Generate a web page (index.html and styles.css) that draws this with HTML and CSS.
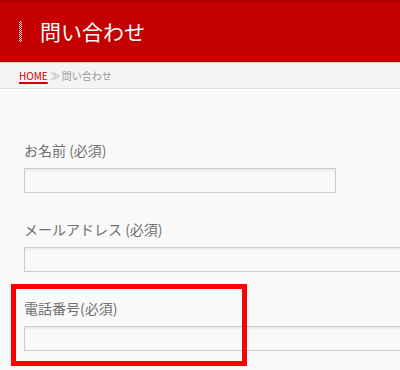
FILE: index.html
```html
<!DOCTYPE html>
<html lang="ja">
<head>
  <meta charset="UTF-8">
  <meta name="viewport" content="width=device-width, initial-scale=1.0">
  <title>問い合わせ</title>
  <link rel="stylesheet" href="styles.css">
</head>
<body>
  <header class="page-head">
    <span class="head-bar"></span>
    <h1>問い合わせ</h1>
  </header>

  <nav class="crumbs">
    <a href="#">HOME</a>
    <span class="sep">≫</span>
    <span class="here">問い合わせ</span>
  </nav>

  <main class="content">
    <form class="contact">
      <div class="field">
        <label for="name">お名前 (必須)</label>
        <input type="text" id="name" class="short">
      </div>
      <div class="field">
        <label for="mail">メールアドレス (必須)</label>
        <input type="text" id="mail" class="wide">
      </div>
      <div class="field">
        <label for="tel">電話番号(必須)</label>
        <input type="text" id="tel" class="wide">
      </div>
    </form>
    <div class="highlight"></div>
  </main>
</body>
</html>
```

FILE: styles.css
```css
body {
  margin: 0;
  background: #f9f9f9;
  font-family: "Noto Sans CJK JP", "Liberation Sans", sans-serif;
  color: #707070;
  overflow: hidden;
}
.page-head {
  height: 62px;
  display: flex;
  align-items: center;
  padding-left: 19px;
  background: linear-gradient(#a80000, #c40000 3px);
}
.head-bar {
  width: 3px;
  height: 21px;
  margin-right: 18px;
  background: conic-gradient(#fff 25%, transparent 0 50%, #fff 0 75%, transparent 0) 0 0 / 2px 2px;
}
.page-head h1 {
  margin: 0;
  font-size: 21px;
  font-weight: normal;
  line-height: 1;
  color: #fff;
}
.crumbs {
  height: 25px;
  display: flex;
  align-items: center;
  gap: 2px;
  padding-left: 19px;
  font-size: 10px;
  background: #f4f4f4;
  border-top: 1px solid #ccc;
  border-bottom: 1px solid #ddd;
  box-shadow: 0 1px 0 #fff;
}
.crumbs a {
  color: #c00;
  text-decoration: underline;
  text-underline-offset: 2px;
  text-decoration-thickness: 2px;
}
.crumbs .sep {
  color: #aaa;
}
.crumbs .here {
  color: #999;
}
.content {
  position: relative;
  overflow: hidden;
  padding: 51px 0 0 24px;
}
.field {
  margin-bottom: 26px;
}
.field label {
  display: block;
  font-size: 14px;
  line-height: 20px;
  margin-bottom: 8px;
}
.field input {
  display: block;
  box-sizing: border-box;
  height: 25px;
  margin: 0;
  border: 1px solid #ccc;
  background: #f9f9f9;
  box-shadow: inset 0 2px 2px rgba(0, 0, 0, 0.06);
}
.field input.short {
  width: 312px;
}
.field input.wide {
  width: calc(100% + 10px);
}
.highlight {
  position: absolute;
  left: 11px;
  top: 195px;
  width: 226px;
  height: 72px;
  border: 5px solid #ff0000;
}
```
